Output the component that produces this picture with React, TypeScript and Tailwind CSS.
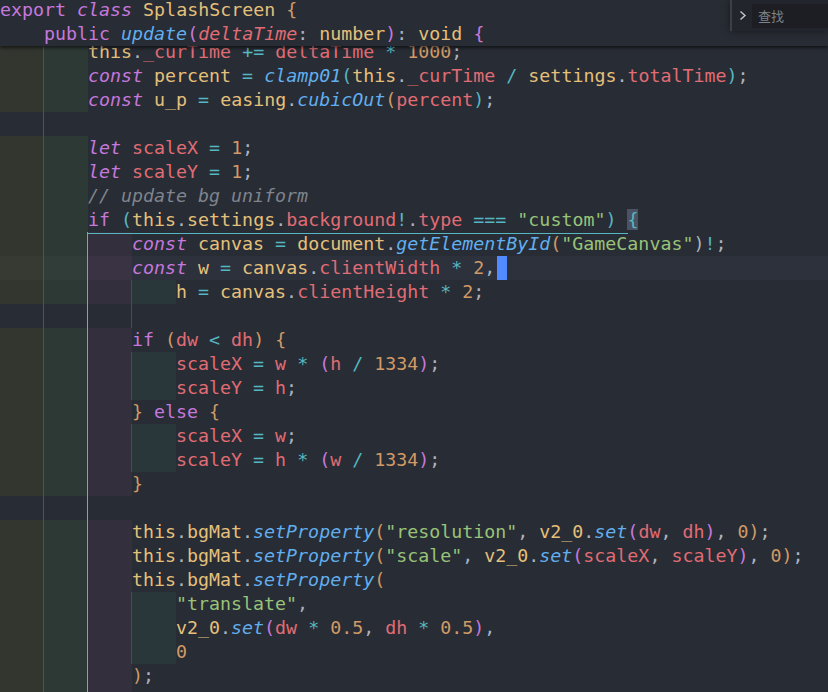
import React from "react";

type Tok = [string, string];

const COL: Record<string, string> = {
  kw: "text-[#c678dd]",
  ki: "text-[#c678dd] italic",
  fn: "text-[#61afef] italic",
  y: "text-[#e5c07b]",
  r: "text-[#e06c75]",
  ri: "text-[#e06c75] italic",
  c: "text-[#56b6c2]",
  o: "text-[#d19a66]",
  g: "text-[#98c379]",
  p: "text-[#abb2bf]",
  pu: "text-[#c678dd]",
  cm: "text-[#7f848e] italic",
  hb: "text-[#56b6c2] bg-[#4b5263]",
};

function tk(...parts: string[]): Tok[] {
  return parts.map((s) => {
    const i = s.indexOf(":");
    return [s.slice(i + 1), s.slice(0, i)] as Tok;
  });
}

type Line = {
  ind: number; // indent level of text (0 for empty)
  cells: number; // indent cells rendered
  cyan?: boolean;
  gray?: boolean;
  cur?: boolean;
  toks?: Tok[];
  cursor?: boolean;
  topRule?: boolean;
};

const lines: Line[] = [
  { ind: 2, cells: 2, toks: tk("y:this", "p:.", "r:_curTime", "p: ", "c:+=", "p: ", "r:deltaTime", "p: ", "c:*", "p: ", "o:1000", "p:;") },
  { ind: 2, cells: 2, toks: tk("ki:const", "p: ", "y:percent", "p: ", "c:=", "p: ", "fn:clamp01", "c:(", "y:this", "p:.", "r:_curTime", "p: ", "c:/", "p: ", "y:settings", "p:.", "r:totalTime", "c:)", "p:;") },
  { ind: 2, cells: 2, toks: tk("ki:const", "p: ", "y:u_p", "p: ", "c:=", "p: ", "y:easing", "p:.", "fn:cubicOut", "o:(", "r:percent", "c:)", "p:;") },
  { ind: 0, cells: 1 },
  { ind: 2, cells: 2, toks: tk("ki:let", "p: ", "r:scaleX", "p: ", "c:=", "p: ", "o:1", "p:;") },
  { ind: 2, cells: 2, toks: tk("ki:let", "p: ", "r:scaleY", "p: ", "c:=", "p: ", "o:1", "p:;") },
  { ind: 2, cells: 2, toks: tk("cm:// update bg uniform") },
  { ind: 2, cells: 2, toks: tk("kw:if", "p: ", "c:(", "y:this", "p:.", "y:settings", "p:.", "r:background", "c:!", "p:.", "r:type", "p: ", "c:===", "p: ", "g:\"custom\"", "c:)", "p: ", "hb:{") },
  { ind: 3, cells: 3, cyan: true, topRule: true, toks: tk("ki:const", "p: ", "y:canvas", "p: ", "c:=", "p: ", "y:document", "p:.", "fn:getElementById", "o:(", "g:\"GameCanvas\"", "p:)", "c:!", "p:;") },
  { ind: 3, cells: 3, cyan: true, cur: true, cursor: true, toks: tk("ki:const", "p: ", "y:w", "p: ", "c:=", "p: ", "y:canvas", "p:.", "r:clientWidth", "p: ", "c:*", "p: ", "o:2", "p:,") },
  { ind: 4, cells: 4, cyan: true, gray: true, toks: tk("y:h", "p: ", "c:=", "p: ", "y:canvas", "p:.", "r:clientHeight", "p: ", "c:*", "p: ", "o:2", "p:;") },
  { ind: 0, cells: 3, cyan: true, gray: true },
  { ind: 3, cells: 3, cyan: true, toks: tk("kw:if", "p: ", "o:(", "r:dw", "p: ", "c:<", "p: ", "r:dh", "o:)", "p: ", "o:{") },
  { ind: 4, cells: 4, cyan: true, gray: true, toks: tk("r:scaleX", "p: ", "c:=", "p: ", "r:w", "p: ", "c:*", "p: ", "pu:(", "r:h", "p: ", "c:/", "p: ", "o:1334", "pu:)", "p:;") },
  { ind: 4, cells: 4, cyan: true, gray: true, toks: tk("r:scaleY", "p: ", "c:=", "p: ", "r:h", "p:;") },
  { ind: 3, cells: 3, cyan: true, toks: tk("o:}", "p: ", "kw:else", "p: ", "o:{") },
  { ind: 4, cells: 4, cyan: true, gray: true, toks: tk("r:scaleX", "p: ", "c:=", "p: ", "r:w", "p:;") },
  { ind: 4, cells: 4, cyan: true, gray: true, toks: tk("r:scaleY", "p: ", "c:=", "p: ", "r:h", "p: ", "c:*", "p: ", "pu:(", "r:w", "p: ", "c:/", "p: ", "o:1334", "pu:)", "p:;") },
  { ind: 3, cells: 3, cyan: true, toks: tk("o:}") },
  { ind: 0, cells: 2, cyan: true },
  { ind: 3, cells: 3, cyan: true, toks: tk("y:this", "p:.", "y:bgMat", "p:.", "fn:setProperty", "o:(", "g:\"resolution\"", "p:, ", "y:v2_0", "p:.", "fn:set", "pu:(", "r:dw", "p:, ", "r:dh", "pu:)", "p:, ", "o:0", "o:)", "p:;") },
  { ind: 3, cells: 3, cyan: true, toks: tk("y:this", "p:.", "y:bgMat", "p:.", "fn:setProperty", "o:(", "g:\"scale\"", "p:, ", "y:v2_0", "p:.", "fn:set", "pu:(", "r:scaleX", "p:, ", "r:scaleY", "pu:)", "p:, ", "o:0", "o:)", "p:;") },
  { ind: 3, cells: 3, cyan: true, toks: tk("y:this", "p:.", "y:bgMat", "p:.", "fn:setProperty", "o:(") },
  { ind: 4, cells: 4, cyan: true, gray: true, toks: tk("g:\"translate\"", "p:,") },
  { ind: 4, cells: 4, cyan: true, gray: true, toks: tk("y:v2_0", "p:.", "fn:set", "pu:(", "r:dw", "p: ", "c:*", "p: ", "o:0.5", "p:, ", "r:dh", "p: ", "c:*", "p: ", "o:0.5", "pu:)", "p:,") },
  { ind: 4, cells: 4, cyan: true, gray: true, toks: tk("o:0") },
  { ind: 3, cells: 3, cyan: true, toks: tk("o:)", "p:;") },
  { ind: 3, cells: 3, cyan: true },
];

const BG = ["bg-[#32362f]", "bg-[#2d3934]", "bg-[#342f3d]", "bg-[#29363a]"];
const BGC = ["bg-[#363a33]", "bg-[#313d39]", "bg-[#393343]", "bg-[#2d3a3f]"];

function Toks({ toks }: { toks: Tok[] }) {
  return (
    <span className="whitespace-pre">
      {toks.map(([t, k], i) => (
        <span key={i} className={COL[k]}>
          {t}
        </span>
      ))}
    </span>
  );
}

function CodeLine({ line }: { line: Line }) {
  const cells = [];
  for (let i = 0; i < line.cells; i++) {
    let cls = "h-full w-[44px] shrink-0";
    if (line.ind > i) cls += " " + (line.cur ? BGC[i] : BG[i]);
    if (i === 0) cls += " border-r border-[#5a4a68]";
    if (i === 1 && line.cyan) cls += " border-r border-[#56b6c2]";
    if (i === 2 && line.gray) cls += " border-r border-[#474c55]";
    cells.push(<div key={i} className={cls} />);
  }
  return (
    <div className={"relative flex h-[24px] items-stretch " + (line.cur ? "bg-[#2c313c]" : "")}>
      {cells}
      {line.toks && (
        <div className="flex items-center">
          <Toks toks={line.toks} />
          {line.cursor && <span className="ml-[2px] inline-block h-[24px] w-[10px] bg-[#528bff]" />}
        </div>
      )}
      {line.topRule && <div className="absolute left-[87px] top-px h-px w-[541px] bg-[#56b6c2]" />}
    </div>
  );
}

export default function App() {
  return (
    <div className="relative h-[692px] w-[828px] overflow-hidden bg-[#282c34] font-['DejaVu_Sans_Mono',monospace] text-[18.3px] leading-[24px] text-[#abb2bf]">
      <div className="flex flex-col pt-[40px]">
        {lines.map((l, i) => (
          <CodeLine key={i} line={l} />
        ))}
      </div>

      {/* sticky scroll header */}
      <div className="absolute left-0 right-0 top-0 z-10 h-[46px] overflow-hidden bg-[#282c34] shadow-[0_2px_3px_rgba(0,0,0,0.55)]">
        <div className="-mt-[2px] flex flex-col">
          <div className="flex h-[24px] items-center">
            <Toks toks={tk("kw:export", "p: ", "ki:class", "p: ", "y:SplashScreen", "p: ", "o:{")} />
          </div>
          <div className="flex h-[24px] items-center">
            <Toks toks={tk("p:    ", "kw:public", "p: ", "fn:update", "pu:(", "ri:deltaTime", "p::", "p: ", "y:number", "pu:)", "p::", "p: ", "y:void", "p: ", "pu:{")} />
          </div>
        </div>
      </div>

      {/* find widget */}
      <div className="absolute right-0 top-0 z-20 flex h-[31px] w-[98px] items-center border-l-2 border-[#3b3f47] bg-[#22252b] pl-[7px] shadow-[0_0_8px_rgba(0,0,0,0.45)]">
        <svg width="8" height="11" viewBox="0 0 8 11" className="shrink-0">
          <path d="M1.5 1.5 L6 5.5 L1.5 9.5" fill="none" stroke="#c5c8ce" strokeWidth="1.4" />
        </svg>
        <div className="ml-[5px] flex h-[24px] flex-1 items-center bg-[#1c1e23] pl-[6px] font-['Noto_Sans_CJK_SC',sans-serif] text-[13px] leading-none text-[#7d8189]">
          查找
        </div>
      </div>
    </div>
  );
}
